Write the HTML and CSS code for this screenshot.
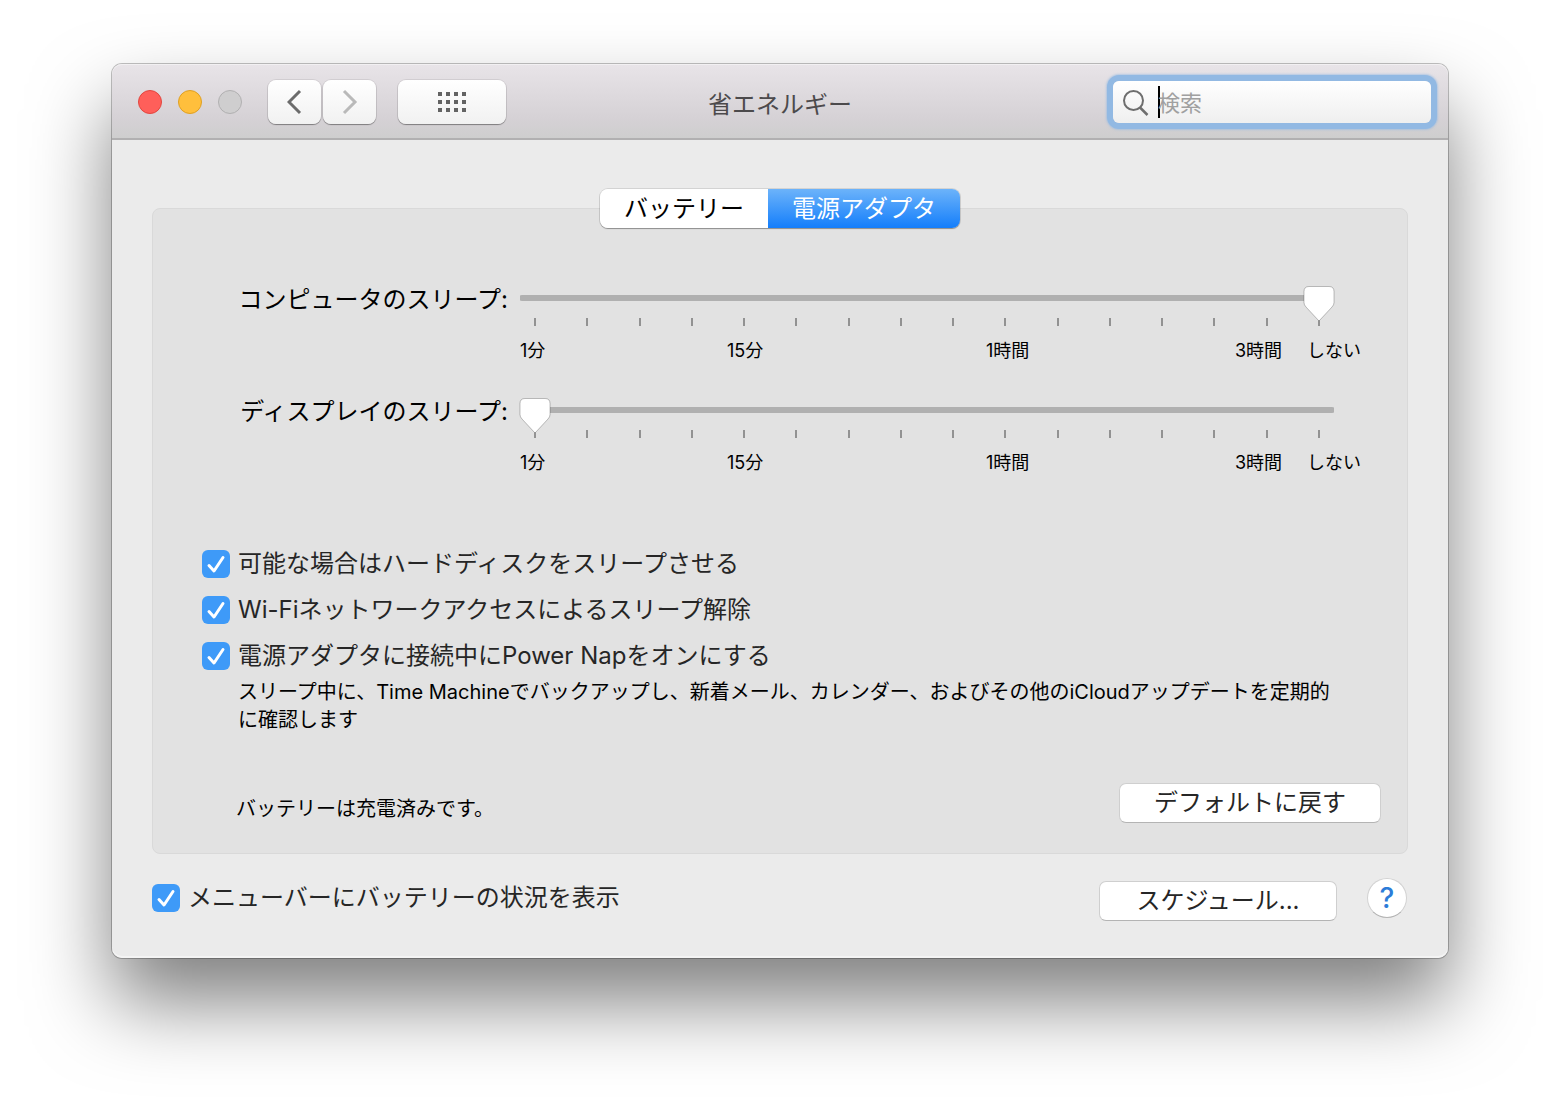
FILE: index.html
```html
<!DOCTYPE html>
<html lang="ja">
<head>
<meta charset="utf-8">
<title>省エネルギー</title>
<link rel="stylesheet" href="styles.css">
</head>
<body>
<main class="window">
  <header class="titlebar">
    <div class="titlebar-left">
      <div class="traffic">
        <button class="light light-close" type="button" aria-label="閉じる"></button>
        <button class="light light-minimize" type="button" aria-label="しまう"></button>
        <button class="light light-zoom" type="button" aria-label="拡大" disabled></button>
      </div>
      <div class="nav">
        <button class="tool" type="button" aria-label="戻る">
          <svg width="16" height="26" viewBox="0 0 16 26"><path d="M13 2 2 13 13 24" fill="none" stroke="#6b6b6b" stroke-width="3"/></svg>
        </button>
        <button class="tool" type="button" aria-label="進む" disabled>
          <svg width="16" height="26" viewBox="0 0 16 26"><path d="M2 2 13 13 2 24" fill="none" stroke="#b9b9b9" stroke-width="3"/></svg>
        </button>
      </div>
      <button class="tool tool-grid" type="button" aria-label="すべてを表示">
        <svg width="28" height="20" viewBox="0 0 28 20" fill="#636363">
          <path d="M0 0h4v4H0zM8 0h4v4H8zM16 0h4v4h-4zM24 0h4v4h-4zM0 8h4v4H0zM8 8h4v4H8zM16 8h4v4h-4zM24 8h4v4h-4zM0 16h4v4H0zM8 16h4v4H8zM16 16h4v4h-4zM24 16h4v4h-4z"/>
        </svg>
      </button>
    </div>
    <h1 class="title">省エネルギー</h1>
    <label class="search">
      <svg class="search-icon" width="26" height="28" viewBox="0 0 26 28" fill="none" stroke="#6e6e6e">
        <circle cx="10.500" cy="12.500" r="9.500" stroke-width="2"/><path d="M17 19.500 24.500 27" stroke-width="2.500"/>
      </svg>
      <span class="caret"></span>
      <input class="search-input" type="text" placeholder="検索" aria-label="検索">
    </label>
  </header>

  <div class="content">
    <div class="tabs" role="tablist">
      <button class="tab" type="button" role="tab" aria-selected="false">バッテリー</button>
      <button class="tab tab-active" type="button" role="tab" aria-selected="true">電源アダプタ</button>
    </div>

    <section class="panel">
      <div class="sliders">
        <div class="slider-row">
          <label class="slider-label" for="computer-sleep">コンピュータのスリープ:</label>
          <div class="slider">
            <input class="range" id="computer-sleep" type="range" min="0" max="15" value="15">
            <div class="ticks"><i></i><i></i><i></i><i></i><i></i><i></i><i></i><i></i><i></i><i></i><i></i><i></i><i></i><i></i><i></i><i></i></div>
            <div class="scale"><span>1分</span><span>15分</span><span>1時間</span><span>3時間</span><span>しない</span></div>
          </div>
        </div>
        <div class="slider-row">
          <label class="slider-label" for="display-sleep">ディスプレイのスリープ:</label>
          <div class="slider">
            <input class="range" id="display-sleep" type="range" min="0" max="15" value="0">
            <div class="ticks"><i></i><i></i><i></i><i></i><i></i><i></i><i></i><i></i><i></i><i></i><i></i><i></i><i></i><i></i><i></i><i></i></div>
            <div class="scale"><span>1分</span><span>15分</span><span>1時間</span><span>3時間</span><span>しない</span></div>
          </div>
        </div>
      </div>

      <div class="options">
        <label class="check"><input type="checkbox" checked>可能な場合はハードディスクをスリープさせる</label>
        <label class="check"><input type="checkbox" checked>Wi-Fiネットワークアクセスによるスリープ解除</label>
        <label class="check"><input type="checkbox" checked>電源アダプタに接続中にPower Napをオンにする</label>
      </div>
      <p class="note">スリープ中に、Time Machineでバックアップし、新着メール、カレンダー、およびその他のiCloudアップデートを定期的に確認します</p>

      <div class="panel-foot">
        <p class="status">バッテリーは充電済みです。</p>
        <button class="button button-defaults" type="button">デフォルトに戻す</button>
      </div>
    </section>

    <footer class="footer">
      <label class="check"><input type="checkbox" checked>メニューバーにバッテリーの状況を表示</label>
      <div class="footer-actions">
        <button class="button button-schedule" type="button">スケジュール...</button>
        <button class="help" type="button" aria-label="ヘルプ">?</button>
      </div>
    </footer>
  </div>
</main>
</body>
</html>
```
FILE: styles.css
```css
* {
  box-sizing: border-box;
}

body {
  margin: 0;
  padding: 64px 112px 160px;
  background: #fff;
  color: #000;
  font: 24px/28px Inter, "Noto Sans CJK JP", sans-serif;
}

button,
input {
  margin: 0;
  padding: 0;
  border: 0;
  font: inherit;
  color: inherit;
}

h1,
p {
  margin: 0;
}

.window {
  border-radius: 10px;
  background: #ebebeb;
  box-shadow: inset 0 -2px #f4f4f4, 0 0 0 1px rgba(0, 0, 0, 0.24), 0 44px 80px rgba(0, 0, 0, 0.5);
}

/* Title bar */
.titlebar {
  display: grid;
  grid-template-columns: 1fr auto 1fr;
  align-items: center;
  height: 76px;
  padding: 2px 17px 0;
  border-bottom: 2px solid #b1b0b1;
  border-radius: 10px 10px 0 0;
  background: linear-gradient(#e8e4e8, #d5d1d5 75%, #cecece);
  box-shadow: inset 0 1px #f2f0f2;
}

.titlebar-left,
.traffic,
.nav {
  display: flex;
  align-items: center;
}

.titlebar-left {
  padding-left: 9px;
}

.traffic {
  gap: 16px;
}

.light {
  width: 24px;
  height: 24px;
  border: 1px solid #e2463f;
  border-radius: 50%;
  background: #ff5f5a;
}

.light-minimize {
  border-color: #dfa023;
  background: #ffbf3c;
}

.light-zoom {
  border-color: #b1b0b1;
  background: #cfcecf;
}

.nav {
  gap: 2px;
  margin: 0 22px 0 26px;
}

.tool {
  display: flex;
  align-items: center;
  justify-content: center;
  width: 53px;
  height: 44px;
  border-radius: 8px;
  background: linear-gradient(#fff, #f1f1f1);
  box-shadow: 0 0 0 1px rgba(0, 0, 0, 0.08), 0 1px 1px rgba(0, 0, 0, 0.35);
}

.tool-grid {
  width: 108px;
}

.title {
  padding-top: 6px;
  font-size: 24px;
  font-weight: 400;
  color: #4c4a4c;
}

.search {
  display: flex;
  align-items: center;
  justify-self: end;
  width: 318px;
  height: 42px;
  padding: 0 10px;
  border-radius: 6px;
  background: linear-gradient(#fff, #efefef);
  box-shadow: 0 0 0 6px #92b9e3, 0 0 2px 7px rgba(146, 185, 227, 0.6);
}

.search-icon {
  flex: none;
}

.caret {
  flex: none;
  width: 2px;
  height: 32px;
  margin: 0 -2px 0 9px;
  background: #000;
}

.search-input {
  flex: 1;
  min-width: 0;
  padding-top: 2px;
  background: none;
  font-size: 22px;
  outline: none;
}

.search-input::placeholder {
  color: #a0a0a0;
}

/* Body */
.content {
  padding: 49px 40px 37px;
}

.tabs {
  position: relative;
  display: flex;
  width: fit-content;
  margin: 0 auto -20px;
  border-radius: 8px;
  box-shadow: 0 0 0 1px rgba(0, 0, 0, 0.1), 0 1px 1px rgba(0, 0, 0, 0.3);
}

.tab {
  height: 39px;
  padding: 0 24px;
  border-radius: 8px 0 0 8px;
  background: #fff;
}

.tab-active {
  border-radius: 0 8px 8px 0;
  background: linear-gradient(#6cb3fa, #147efb);
  color: #fff;
}

.panel {
  padding: 77px 26px 30px 49px;
  border: 1px solid #d9d9d9;
  border-radius: 8px;
  background: #e2e2e2;
}

.sliders {
  display: grid;
  gap: 35px;
  padding: 0 46px 0 34px;
}

.slider-row {
  display: grid;
  grid-template-columns: 272px 1fr;
  gap: 11px;
}

.slider-label {
  text-align: right;
  white-space: nowrap;
}

.range {
  display: block;
  position: relative;
  width: 100%;
  height: 24px;
  background: none;
  -webkit-appearance: none;
  appearance: none;
}

.range::-webkit-slider-runnable-track {
  height: 6px;
  border-radius: 3px;
  background: linear-gradient(#b0b0b0, #b0b0b0) center / calc(100% - 2px) 6px no-repeat;
}

.range::-webkit-slider-thumb {
  -webkit-appearance: none;
  width: 32px;
  height: 37px;
  margin-top: -10px;
  background: url("data:image/svg+xml,%3Csvg xmlns='http://www.w3.org/2000/svg' width='32' height='37'%3E%3Cpath d='M6 1.500h20q5 0 5 5v11q0 2.500-2 4.500L16 36 3 22q-2-2-2-4.500V6.500q0-5 5-5z' fill='%23fff' stroke='%23000' stroke-opacity='.24'/%3E%3C/svg%3E") no-repeat;
}

.ticks {
  display: flex;
  justify-content: space-between;
  height: 8px;
  margin: 8px 15px 13px;
}

.ticks i {
  width: 2px;
  background: #929292;
}

.scale {
  display: grid;
  grid-template-columns: 207fr 259fr 249fr 72fr 54fr;
  margin: 0 -26px 0 1px;
  font-size: 18px;
  line-height: 24px;
  white-space: nowrap;
}

.options {
  display: grid;
  gap: 18px;
  margin-top: 75px;
}

.check {
  display: flex;
  align-items: center;
  gap: 8px;
  color: #262626;
}

.check input {
  flex: none;
  width: 28px;
  height: 28px;
  border-radius: 6px;
  background: #3e9af8 url("data:image/svg+xml,%3Csvg xmlns='http://www.w3.org/2000/svg' width='28' height='28'%3E%3Cpath d='M7 15.500 12 21 21 7.500' fill='none' stroke='%23fff' stroke-width='3' stroke-linecap='round' stroke-linejoin='round'/%3E%3C/svg%3E") center no-repeat;
  -webkit-appearance: none;
  appearance: none;
}

.note {
  margin: 8px 0 49px 36px;
  padding-right: 40px;
  font-size: 20px;
}

.panel-foot,
.footer,
.footer-actions {
  display: flex;
  justify-content: space-between;
}

.panel-foot {
  align-items: flex-end;
  padding-left: 34px;
}

.status {
  font-size: 20px;
}

.button {
  height: 40px;
  border: 1px solid #cfcfcf;
  border-bottom-color: #b4b4b4;
  border-radius: 7px;
  background: #fff;
  color: #262626;
}

.button-defaults {
  width: 262px;
}

.button-schedule {
  align-self: flex-end;
  width: 238px;
}

.footer {
  align-items: flex-start;
  margin-top: 24px;
  padding-right: 1px;
}

.footer .check {
  padding-top: 6px;
}

.footer-actions {
  align-items: flex-start;
  gap: 30px;
  height: 43px;
}

.help {
  width: 40px;
  height: 40px;
  border: 1px solid #d2d2d2;
  border-bottom-color: #b4b4b4;
  border-radius: 50%;
  background: #fff;
  color: #2c7cd8;
  font-size: 28px;
  font-weight: 500;
}
```
